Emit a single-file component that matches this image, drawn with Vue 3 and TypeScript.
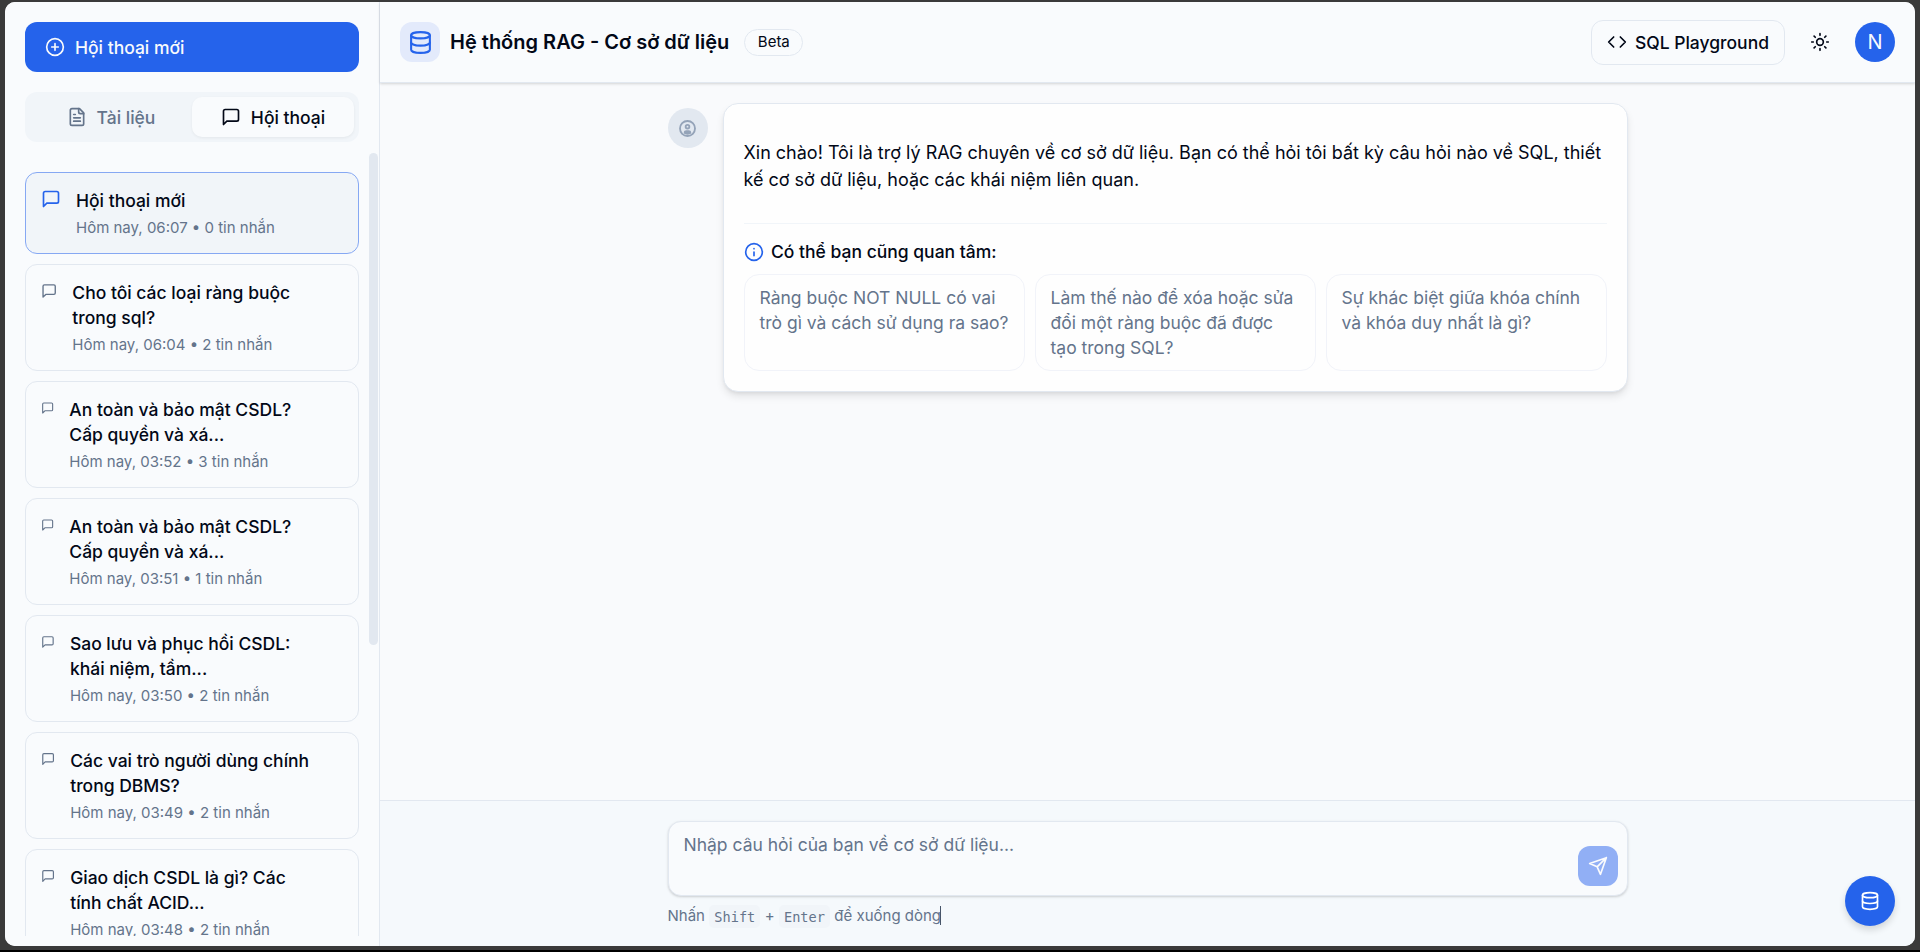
<script setup lang="ts">
interface Conversation {
  title: string[]
  time: string
  count: number
  iconWidth: number
  active?: boolean
}

const conversations: Conversation[] = [
  { title: ['Hội thoại mới'], time: '06:07', count: 0, iconWidth: 20, active: true },
  { title: ['Cho tôi các loại ràng buộc', 'trong sql?'], time: '06:04', count: 2, iconWidth: 16.3 },
  { title: ['An toàn và bảo mật CSDL?', 'Cấp quyền và xá...'], time: '03:52', count: 3, iconWidth: 13.3 },
  { title: ['An toàn và bảo mật CSDL?', 'Cấp quyền và xá...'], time: '03:51', count: 1, iconWidth: 13.3 },
  { title: ['Sao lưu và phục hồi CSDL:', 'khái niệm, tầm...'], time: '03:50', count: 2, iconWidth: 13.9 },
  { title: ['Các vai trò người dùng chính', 'trong DBMS?'], time: '03:49', count: 2, iconWidth: 14.2 },
  { title: ['Giao dịch CSDL là gì? Các', 'tính chất ACID...'], time: '03:48', count: 2, iconWidth: 14.2 },
]

const suggestions: string[][] = [
  ['Ràng buộc NOT NULL có vai', 'trò gì và cách sử dụng ra sao?'],
  ['Làm thế nào để xóa hoặc sửa', 'đổi một ràng buộc đã được', 'tạo trong SQL?'],
  ['Sự khác biệt giữa khóa chính', 'và khóa duy nhất là gì?'],
]
</script>

<template>
  <div class="desktop">
    <div class="window">
      <aside class="sidebar">
        <button class="new-chat">
          <svg class="icon" viewBox="0 0 24 24"><circle cx="12" cy="12" r="10" /><path d="M8 12h8M12 8v8" /></svg>
          <span>Hội thoại mới</span>
        </button>
        <div class="tabs">
          <button class="tab">
            <svg class="icon" viewBox="0 0 24 24"><path d="M15 2H6a2 2 0 0 0-2 2v16a2 2 0 0 0 2 2h12a2 2 0 0 0 2-2V7Z" /><path d="M14 2v4a2 2 0 0 0 2 2h4M10 9H8M16 13H8M16 17H8" /></svg>
            <span>Tài liệu</span>
          </button>
          <button class="tab selected">
            <svg class="icon" viewBox="0 0 24 24"><path d="M21 15a2 2 0 0 1-2 2H7l-4 4V5a2 2 0 0 1 2-2h14a2 2 0 0 1 2 2z" /></svg>
            <span>Hội thoại</span>
          </button>
        </div>
        <div class="history">
          <div class="list">
            <div v-for="(c, i) in conversations" :key="i" class="conversation" :class="{ active: c.active }">
              <svg class="icon chat-icon" viewBox="0 0 24 24" :style="{ width: c.iconWidth + 'px' }"><path d="M21 15a2 2 0 0 1-2 2H7l-4 4V5a2 2 0 0 1 2-2h14a2 2 0 0 1 2 2z" /></svg>
              <div class="info">
                <div class="name"><div v-for="line in c.title" :key="line">{{ line }}</div></div>
                <div class="meta">Hôm nay, {{ c.time }} • {{ c.count }} tin nhắn</div>
              </div>
            </div>
          </div>
          <div class="scrollbar"></div>
        </div>
      </aside>

      <main class="main">
        <header class="header">
          <div class="logo">
            <svg class="icon" viewBox="0 0 24 24"><ellipse cx="12" cy="5" rx="9" ry="3" /><path d="M3 5v14a9 3 0 0 0 18 0V5" /><path d="M3 12a9 3 0 0 0 18 0" /></svg>
          </div>
          <h1>Hệ thống RAG - Cơ sở dữ liệu</h1>
          <span class="badge">Beta</span>
          <div class="actions">
            <button class="playground">
              <svg class="icon" viewBox="0 0 24 24"><path d="m16 18 6-6-6-6M8 6l-6 6 6 6" /></svg>
              <span>SQL Playground</span>
            </button>
            <svg class="icon sun" viewBox="0 0 24 24"><circle cx="12" cy="12" r="4" /><path d="M12 2v2M12 20v2M4.93 4.93l1.41 1.41M17.66 17.66l1.41 1.41M2 12h2M20 12h2M6.34 17.66l-1.41 1.41M19.07 4.93l-1.41 1.41" /></svg>
            <div class="user">N</div>
          </div>
        </header>

        <section class="chat">
          <div class="message">
            <div class="bot">
              <svg class="icon" viewBox="0 0 24 24"><circle cx="12" cy="12" r="10.6" /><circle cx="12" cy="9.4" r="2.6" /><path class="solid" d="M6.8 19.2v-1.5c0-2 1.6-3.2 3.5-3.2h3.4c1.9 0 3.5 1.2 3.5 3.2v1.5c-3 2-7.4 2-10.4 0z" /></svg>
            </div>
            <article class="bubble">
              <p class="greeting">Xin chào! Tôi là trợ lý RAG chuyên về cơ sở dữ liệu. Bạn có thể hỏi tôi bất kỳ câu hỏi nào về SQL, thiết<br />kế cơ sở dữ liệu, hoặc các khái niệm liên quan.</p>
              <div class="related">
                <div class="related-title">
                  <svg class="icon" viewBox="0 0 24 24"><circle cx="12" cy="12" r="10" /><path d="M12 16.5v-4.5M12 8h.01" /></svg>
                  <span>Có thể bạn cũng quan tâm:</span>
                </div>
                <div class="suggestions">
                  <button v-for="(s, i) in suggestions" :key="i" class="suggestion">
                    <span v-for="line in s" :key="line">{{ line }}</span>
                  </button>
                </div>
              </div>
            </article>
          </div>
        </section>

        <footer class="composer">
          <div class="composer-inner">
            <div class="field">
              <span class="placeholder">Nhập câu hỏi của bạn về cơ sở dữ liệu...</span>
              <button class="send">
                <svg class="icon" viewBox="0 0 24 24"><path d="m22 2-7 20-4-9-9-4ZM22 2 11 13" /></svg>
              </button>
            </div>
            <div class="hint">
              <span>Nhấn</span><kbd>Shift</kbd><span>+</span><kbd>Enter</kbd><span>để xuống dòng</span><i class="caret"></i>
            </div>
          </div>
        </footer>
      </main>

      <button class="fab">
        <svg class="icon" viewBox="0 0 24 24"><ellipse cx="12" cy="5" rx="9" ry="3" /><path d="M3 5v14a9 3 0 0 0 18 0V5" /><path d="M3 12a9 3 0 0 0 18 0" /></svg>
      </button>
    </div>
  </div>
</template>

<style>
html,
body {
  margin: 0;
  overflow: hidden;
  background: #000;
}
</style>

<style scoped>
.desktop,
.desktop * {
  box-sizing: border-box;
}
.desktop {
  height: 952px;
  padding: 2px 5px 4px;
  border-bottom: 2px solid #000;
  background: #3a3a3a;
  font-family: Inter, "Noto Sans", sans-serif;
  font-size: 17.5px;
  line-height: 25px;
  color: #020817;
}
button {
  margin: 0;
  padding: 0;
  border: 0;
  background: none;
  font: inherit;
  color: inherit;
  text-align: left;
}
.icon {
  display: block;
  flex: none;
  width: 20px;
  height: 20px;
  fill: none;
  stroke: currentColor;
  stroke-width: 2;
  stroke-linecap: round;
  stroke-linejoin: round;
}
.window {
  position: relative;
  display: flex;
  height: 944px;
  overflow: hidden;
  border-radius: 10px;
  background: #f9fafc;
}
.sidebar {
  display: flex;
  flex: none;
  flex-direction: column;
  width: 375px;
  padding: 20px 0 10px 20px;
  border-right: 1px solid #e2e8f0;
  background: #f9fbfd;
}
.new-chat {
  display: flex;
  flex: none;
  align-items: center;
  gap: 10px;
  width: 334px;
  height: 50px;
  padding: 0 20px;
  border-radius: 12px;
  background: #2563eb;
  color: #f8fafc;
  font-weight: 500;
}
.tabs {
  display: grid;
  flex: none;
  grid-template-columns: 1fr 1fr;
  width: 334px;
  height: 50px;
  margin-top: 20px;
  padding: 5px;
  border-radius: 12px;
  background: #f1f5f9;
}
.tab {
  display: flex;
  align-items: center;
  justify-content: center;
  gap: 10px;
  border-radius: 10px;
  color: #64748b;
  font-weight: 500;
}
.tab.selected {
  background: #f9fbfd;
  color: #020817;
  box-shadow: 0 1px 3px rgba(0, 0, 0, 0.06);
}
.history {
  display: flex;
  flex: 1;
  gap: 10px;
  min-height: 0;
  margin-top: 10px;
  overflow: hidden;
}
.list {
  display: flex;
  flex: none;
  flex-direction: column;
  gap: 10px;
  width: 334px;
  padding-top: 20px;
}
.scrollbar {
  width: 9px;
  height: 492px;
  margin-top: 1px;
  border-radius: 5px;
  background: #e2e8f0;
}
.conversation {
  display: flex;
  flex: none;
  gap: 15px;
  padding: 15px;
  border: 1px solid #e2e8f0;
  border-radius: 12px;
}
.conversation.active {
  border-color: #86a8f3;
  background: #f1f5f9;
}
.chat-icon {
  margin-top: 1px;
  color: #64748b;
}
.active .chat-icon {
  color: #2563eb;
}
.name {
  font-weight: 500;
}
.meta {
  margin-top: 5px;
  font-size: 15px;
  line-height: 20px;
  color: #64748b;
}
.main {
  display: flex;
  flex: 1;
  flex-direction: column;
  min-width: 0;
}
.header {
  display: flex;
  flex: none;
  align-items: center;
  height: 81px;
  padding: 0 20px;
  border-bottom: 1px solid #e2e8f0;
  background: #f9fbfd;
  box-shadow: 0 1px 3px rgba(0, 0, 0, 0.1), 0 1px 2px rgba(0, 0, 0, 0.06);
}
.logo {
  display: flex;
  align-items: center;
  justify-content: center;
  width: 40px;
  height: 40px;
  border-radius: 12px;
  background: #e3eafb;
  color: #2563eb;
}
.logo .icon {
  width: 25px;
  height: 25px;
}
h1 {
  margin: 0 0 0 10px;
  font-size: 20px;
  line-height: 30px;
  font-weight: 600;
}
.badge {
  margin-left: 15px;
  padding: 2.5px 12.5px;
  border: 1px solid #e2e8f0;
  border-radius: 14px;
  font-size: 15px;
  line-height: 20px;
}
.actions {
  display: flex;
  align-items: center;
  margin-left: auto;
}
.playground {
  display: flex;
  align-items: center;
  gap: 8px;
  height: 45px;
  padding: 0 15px;
  border: 1px solid #e2e8f0;
  border-radius: 12px;
  font-weight: 500;
}
.sun {
  margin: 0 25px;
}
.user {
  width: 40px;
  height: 40px;
  border-radius: 50%;
  background: #2563eb;
  color: #f8fafc;
  font-size: 20px;
  line-height: 40px;
  text-align: center;
}
.chat {
  flex: 1;
  padding-top: 20px;
}
.message {
  display: flex;
  gap: 15px;
  width: 960px;
  margin: 0 auto;
}
.bot {
  display: flex;
  flex: none;
  align-items: center;
  justify-content: center;
  width: 40px;
  height: 40px;
  margin-top: 5px;
  border-radius: 50%;
  background: #e2e8f0;
  color: #94a3b8;
}
.bot .icon {
  width: 17px;
  height: 17px;
  overflow: visible;
  stroke-width: 2.6;
}
.bot .solid {
  fill: currentColor;
  stroke: none;
}
.bubble {
  flex: 1;
  height: 289px;
  padding: 35px 20px 20px;
  border: 1px solid #e2e8f0;
  border-radius: 15px;
  background: #fefefe;
  box-shadow: 0 5px 8px -1px rgba(0, 0, 0, 0.1), 0 2px 4px -2px rgba(0, 0, 0, 0.1);
}
.greeting {
  margin: 0;
  font-size: 18px;
  line-height: 27px;
  white-space: nowrap;
}
.related {
  margin-top: 30px;
  padding-top: 15px;
  border-top: 1px solid #f1f5f9;
}
.related-title {
  display: flex;
  align-items: center;
  gap: 7.5px;
  font-weight: 500;
}
.related-title .icon {
  color: #2563eb;
}
.suggestions {
  display: grid;
  grid-template-columns: repeat(3, 1fr);
  gap: 10px;
  margin-top: 10px;
}
.suggestion {
  display: flex;
  flex-direction: column;
  padding: 10px 15px;
  border: 1px solid #f1f3f9;
  border-radius: 15px;
  color: #64748b;
  white-space: nowrap;
}
.composer {
  flex: none;
  height: 146px;
  padding-top: 20px;
  border-top: 1px solid #e2e8f0;
  background: #f5f9fc;
}
.composer-inner {
  width: 960px;
  margin: 0 auto;
}
.field {
  display: flex;
  align-items: flex-start;
  justify-content: space-between;
  height: 75px;
  padding: 10px 9px 9px 15px;
  border: 1px solid #e2e8f0;
  border-radius: 13px;
  background: #f9fbfd;
  box-shadow: 0 1px 3px rgba(0, 0, 0, 0.12), 0 1px 2px rgba(0, 0, 0, 0.06);
}
.placeholder {
  color: #64748b;
}
.send {
  display: flex;
  align-items: center;
  justify-content: center;
  align-self: flex-end;
  width: 40px;
  height: 40px;
  border-radius: 12px;
  background: #91aff5;
  color: #fafbfd;
}
.hint {
  display: flex;
  align-items: flex-start;
  gap: 4.4px;
  margin-top: 9px;
  font-size: 15px;
  line-height: 21px;
  color: #64748b;
}
kbd {
  height: 23px;
  padding: 1px 5px 0;
  border-radius: 5px;
  background: #f1f5f9;
  font-family: "DejaVu Sans Mono", monospace;
  font-size: 13.6px;
  line-height: 23px;
}
.caret {
  width: 1px;
  height: 19px;
  margin: 1px 0 0 -5px;
  background: #475569;
}
.fab {
  position: absolute;
  right: 20px;
  bottom: 20px;
  display: flex;
  align-items: center;
  justify-content: center;
  width: 50px;
  height: 50px;
  border-radius: 50%;
  background: #2563eb;
  color: #fff;
  box-shadow: 0 4px 7px rgba(0, 0, 0, 0.14);
}
</style>
